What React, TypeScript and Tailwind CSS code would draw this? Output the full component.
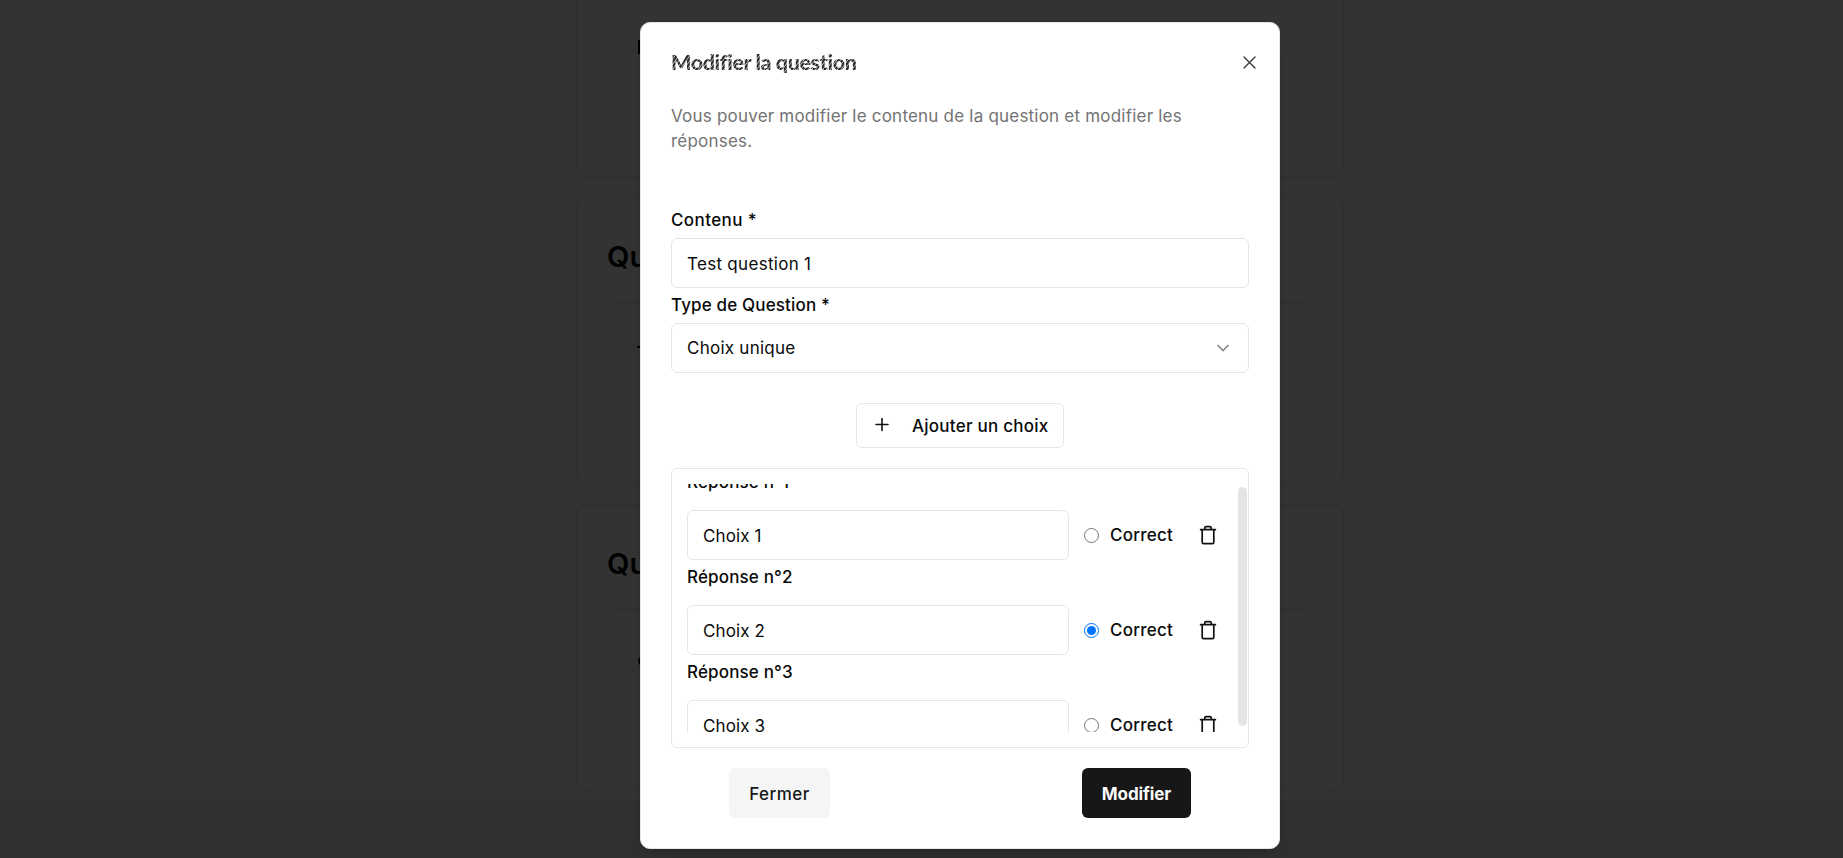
import React from "react";

function TrashIcon() {
  return (
    <svg width="18" height="20" viewBox="0 0 18 20" fill="none" stroke="#111" strokeWidth="1.7" strokeLinecap="round" strokeLinejoin="round" className="shrink-0">
      <path d="M1.6 4.7h14.8M3.2 4.9v12.3a1.4 1.4 0 0 0 1.4 1.4h8.8a1.4 1.4 0 0 0 1.4-1.4V4.9M5.8 4.5V2.8a1.2 1.2 0 0 1 1.2-1.2h4a1.2 1.2 0 0 1 1.2 1.2v1.7" />
    </svg>
  );
}

function Answer({ n, checked }: { n: number; checked?: boolean }) {
  return (
    <div className="flex h-[95px] flex-col">
      <div className="mt-[7px] h-[20px] text-[17px] leading-[20px] font-medium tracking-[0.15px]">Réponse n°{n}</div>
      <div className="mt-[18px] flex items-center">
        <div className="flex h-[50px] w-[382px] shrink-0 items-center rounded-md border border-[#e5e5e5] px-[15px] pt-[4px] text-[17px] tracking-[0.1px]">Choix {n}</div>
        <div className={`ml-[15px] flex h-[15px] w-[15px] shrink-0 items-center justify-center rounded-full border ${checked ? "border-[#0075ff]" : "border-[#767676]"}`}>
          {checked && <div className="h-[9px] w-[9px] rounded-full bg-[#0075ff]" />}
        </div>
        <div className="ml-[11px] w-[89px] pt-[2px] text-[17px] font-medium tracking-[0.25px]">Correct</div>
        <TrashIcon />
      </div>
    </div>
  );
}

function Card({ glyph, height, title }: { glyph: React.ReactNode; height: string; title?: boolean }) {
  return (
    <div className={`w-[768px] shrink-0 rounded-[10px] border border-[#2e2e2e] px-[31px] ${height}`}>
      {title && (
        <>
          <div className="ml-[-1px] pt-[39px] text-[29px] leading-[40px] font-semibold">Question</div>
          <div className="mx-[9px] mt-[25px] h-px bg-[#2d2d2d]" />
        </>
      )}
      {glyph}
    </div>
  );
}

export default function App() {
  return (
    <div className="relative h-[858px] w-full overflow-hidden bg-[#333] font-['Inter','Liberation_Sans',sans-serif] text-black">
      <div className="flex h-[801px] flex-col items-center gap-[20px] pl-[77px]">
        <Card height="-mt-[6px] h-[183px]" glyph={<div className="mt-[45px] ml-[30px] h-[14px] w-[3px] bg-black" />} />
        <Card title height="h-[287px]" glyph={<div className="mt-[43px] ml-[29px] h-[2px] w-[12px] bg-black" />} />
        <Card title height="h-[287px]" glyph={<div className="mt-[46px] ml-[30px] h-[10px] w-[10px] rounded-full bg-black" />} />
      </div>
      <div className="h-[57px] bg-[#303030]" />

      <div className="absolute inset-0 flex items-start justify-center pt-[21.5px] pl-[77px]">
        <div className="flex h-[827px] w-[640px] flex-col rounded-[10px] border border-[#e5e5e5] bg-white px-[30px] text-[#0a0a0a] shadow-lg">
          <div className="mt-[24.5px] flex h-[30px] items-center justify-between">
            <h2 className="bg-[repeating-linear-gradient(125deg,#222_0px,#3a3a3a_1.6px,#c4c4c4_2.3px,#333_3px)] bg-clip-text font-['Lato'] text-[21.5px] leading-[30px] font-black tracking-[-0.4px] whitespace-nowrap text-transparent [font-variant-ligatures:none]">Modifier la question</h2>
            <svg width="13" height="13" viewBox="0 0 13 13" stroke="#444" strokeWidth="1.5" strokeLinecap="round" className="mr-[-6.5px]">
              <path d="M1 1l11 11M12 1L1 12" />
            </svg>
          </div>
          <p className="mt-[26.5px] h-[50px] text-[17px] leading-[25px] tracking-[0.21px] whitespace-nowrap text-[#737373]">
            Vous pouver modifier le contenu de la question et modifier les
            <br />
            réponses.
          </p>
          <div className="mt-[56px] h-[20px] text-[17px] leading-[20px] font-medium tracking-[0.4px]">Contenu *</div>
          <div className="mt-[8px] flex h-[50px] items-center rounded-md border border-[#e5e5e5] px-[15px] pt-[4px] text-[17px] tracking-[0.3px]">Test question 1</div>
          <div className="mt-[7px] h-[20px] text-[17px] leading-[20px] font-medium tracking-[0.15px]">Type de Question *</div>
          <div className="mt-[8px] flex h-[50px] items-center justify-between rounded-md border border-[#e5e5e5] px-[15px] text-[17px] tracking-[0.25px]">
            <span className="pt-[2px]">Choix unique</span>
            <svg width="20" height="20" viewBox="0 0 20 20" fill="none" stroke="#888" strokeWidth="1.7">
              <path d="M4.5 7l5.5 5.5L15.5 7" />
            </svg>
          </div>
          <div className="mt-[30px] flex h-[45px] w-[208px] items-center self-center rounded-md border border-[#e5e5e5] pl-[18px] text-[17px] font-medium tracking-[0.25px]">
            <svg width="14" height="14" viewBox="0 0 14 14" stroke="#111" strokeWidth="1.6" strokeLinecap="round">
              <path d="M7 .5v12M1 6.5h12" />
            </svg>
            <span className="ml-[23px] pt-[3px] whitespace-nowrap">Ajouter un choix</span>
          </div>
          <div className="mt-[20px] flex h-[280px] justify-between rounded-md border border-[#e5e5e5] pr-px pl-[15px]">
            <div className="mt-[15px] h-[248px] overflow-hidden">
              <div className="mt-[-18.5px]">
                <Answer n={1} />
                <Answer n={2} checked />
                <Answer n={3} />
              </div>
            </div>
            <div className="mt-[18px] h-[239px] w-[9px] rounded-full bg-[#e5e5e5]" />
          </div>
          <div className="mt-[20px] flex justify-between pr-[58px] pl-[58px] text-[17px]">
            <div className="flex h-[50px] w-[101px] items-center justify-center rounded-md bg-[#f5f5f5] pt-[4px] font-medium tracking-[0.45px] text-[#171717]">Fermer</div>
            <div className="flex h-[50px] w-[109px] items-center justify-center rounded-md bg-[#171717] pt-[4px] font-bold tracking-[-0.1px] text-[#fafafa]">Modifier</div>
          </div>
        </div>
      </div>
    </div>
  );
}
